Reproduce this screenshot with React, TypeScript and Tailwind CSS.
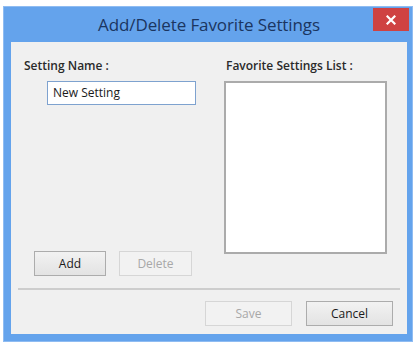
import React from 'react';

const font = { fontFamily: '"Open Sans", "Noto Sans", "Liberation Sans", sans-serif' };

function DialogButton({ label, disabled, width }: { label: string; disabled?: boolean; width: string }) {
  return (
    <button
      disabled={disabled}
      className={`${width} h-[25px] flex items-center justify-center text-[12px] border ${
        disabled
          ? 'border-[#d6d6d6] bg-[#f2f2f2] text-[#a8a8a8]'
          : 'border-[#acacac] bg-gradient-to-b from-[#f2f2f2] to-[#e3e3e3] text-[#1a1a1a] font-medium'
      }`}
    >
      {label}
    </button>
  );
}

export default function App() {
  return (
    <div className="w-[415px] h-[345px] bg-white overflow-hidden pt-[6px] pl-[3px]" style={font}>
      {/* Window frame */}
      <div className="w-[410px] h-[336px] bg-[#64a3ec] border border-[#8fbcf2] flex flex-col">
        {/* Title bar */}
        <div className="relative h-[35px] flex items-center justify-center">
          <span className="text-[17px] font-medium text-[#1b3560] tracking-[-0.1px] ml-[2px]">Add/Delete Favorite Settings</span>
          <div className="absolute right-[3px] top-[1px] w-[36px] h-[23px] bg-[#cf4242] flex items-center justify-center">
            <svg width="10" height="10" viewBox="0 0 10 10">
              <path d="M1.5 1.5 L8.5 8.5 M8.5 1.5 L1.5 8.5" stroke="#ffffff" strokeWidth="2.2" strokeLinecap="square" />
            </svg>
          </div>
        </div>

        {/* Client area */}
        <div className="ml-[7px] mr-[5px] w-[396px] h-[292px] bg-[#f0f0f0] flex flex-col text-[12px] text-[#222]">
          <div className="flex h-[234px] pt-[16px]">
            {/* Left column */}
            <div className="w-[213px] pl-[13px] flex flex-col">
              <div className="h-[16px] leading-[16px] font-semibold text-[#2a2a2a]">Setting Name :</div>
              <div className="mt-[7px] ml-[23px] w-[149px] h-[24px] bg-white border border-[#7ea2cf] flex items-center px-[5px] text-[12px] font-medium text-[#1a1a1a]">
                New Setting
              </div>
              <div className="flex-1" />
              <div className="flex gap-[13px] ml-[10px]">
                <DialogButton label="Add" width="w-[72px]" />
                <DialogButton label="Delete" width="w-[73px]" disabled />
              </div>
            </div>

            {/* Right column */}
            <div className="flex flex-col">
              <div className="h-[16px] leading-[16px] font-semibold text-[#2a2a2a] ml-[2px]">Favorite Settings List :</div>
              <div className="mt-[7px] w-[163px] h-[173px] bg-white border-2 border-[#ababab]" />
            </div>
          </div>

          <div className="mt-[12px] mx-[7px] h-[2px] bg-[#cdcdcd]" />

          <div className="mt-[11px] flex justify-end gap-[14px] pr-[14px]">
            <DialogButton label="Save" width="w-[87px]" disabled />
            <DialogButton label="Cancel" width="w-[87px]" />
          </div>
        </div>
      </div>
    </div>
  );
}
